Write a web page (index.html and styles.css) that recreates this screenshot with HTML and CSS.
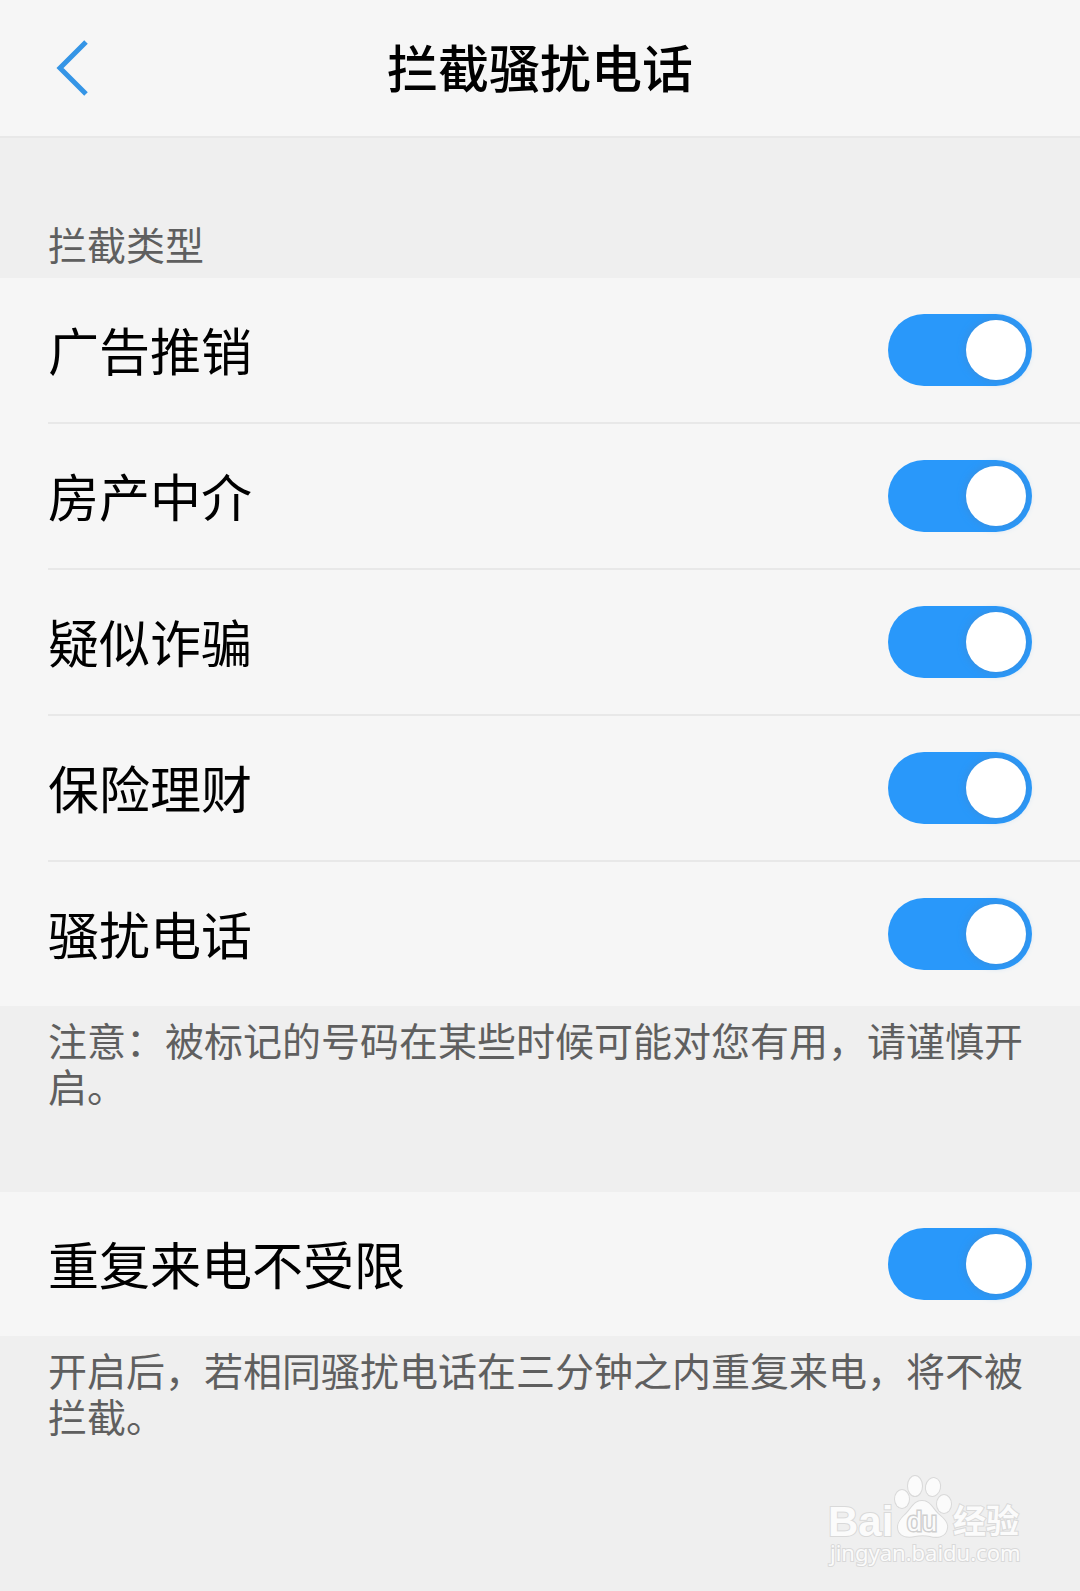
FILE: index.html
```html
<!DOCTYPE html>
<html lang="zh-CN">
<head>
<meta charset="utf-8">
<meta name="viewport" content="width=device-width, initial-scale=1">
<title>拦截骚扰电话</title>
<link rel="stylesheet" href="styles.css">
</head>
<body>
<div class="page">
  <header class="topbar">
    <button class="back" type="button" aria-label="返回">
      <svg width="32" height="56" viewBox="0 0 32 56" fill="none" stroke="#3595e6" stroke-width="5"><path d="M30 2 L4 28 L30 54"/></svg>
    </button>
    <h1 class="title">拦截骚扰电话</h1>
  </header>
  <main class="content">
    <section>
      <h2 class="section-label">拦截类型</h2>
      <div class="group">
        <label class="row"><span>广告推销</span><input class="switch" type="checkbox" role="switch" checked></label>
        <label class="row"><span>房产中介</span><input class="switch" type="checkbox" role="switch" checked></label>
        <label class="row"><span>疑似诈骗</span><input class="switch" type="checkbox" role="switch" checked></label>
        <label class="row"><span>保险理财</span><input class="switch" type="checkbox" role="switch" checked></label>
        <label class="row"><span>骚扰电话</span><input class="switch" type="checkbox" role="switch" checked></label>
      </div>
      <p class="note">注意：被标记的号码在某些时候可能对您有用，请谨慎开启。</p>
    </section>
    <section class="section-repeat">
      <div class="group">
        <label class="row"><span>重复来电不受限</span><input class="switch" type="checkbox" role="switch" checked></label>
      </div>
      <p class="note">开启后，若相同骚扰电话在三分钟之内重复来电，将不被拦截。</p>
    </section>
  </main>
  <footer class="watermark">
    <svg class="brand" width="230" height="125" viewBox="0 0 230 125">
      <g class="mark">
        <ellipse cx="92" cy="39" rx="7" ry="9"/>
        <ellipse cx="105" cy="26" rx="7" ry="10"/>
        <ellipse cx="123" cy="27" rx="7" ry="9" transform="rotate(12 123 27)"/>
        <ellipse cx="134" cy="44" rx="7" ry="9"/>
        <path d="M112 41 C120 41 122 48 128 54 C134 59 138 63 137 68 C136 77 127 78 120 76 C115 75 110 75 105 76 C97 78 88 76 88 67 C88 61 93 57 97 53 C102 48 104 41 112 41 Z"/>
        <text class="bai" x="18" y="76">Bai</text>
        <text class="jingyan" x="143" y="73">经验</text>
        <text class="url" x="20" y="101">jingyan.baidu.com</text>
      </g>
      <text class="du" x="112" y="71" text-anchor="middle">du</text>
    </svg>
  </footer>
</div>
</body>
</html>
```
FILE: styles.css
```css
* { box-sizing: border-box; }

body {
  margin: 0;
  background: #efefef;
  color: #000;
  font-family: "Noto Sans CJK SC", sans-serif;
}

.page {
  display: flex;
  flex-direction: column;
  min-height: 100vh;
}

.topbar {
  display: grid;
  grid-template-columns: 96px 1fr 96px;
  align-items: center;
  height: 138px;
  background: #f6f6f6;
  border-bottom: 2px solid #e8e8e8;
}

.back {
  display: flex;
  justify-content: flex-end;
  padding: 0 8px 0 0;
  border: 0;
  background: none;
}

.title {
  margin: 0;
  padding-bottom: 4px;
  font-size: 51px;
  line-height: 72px;
  font-weight: 500;
  text-align: center;
}

.section-label {
  margin: 0;
  padding: 82px 48px 12px;
  color: #5f5f5f;
  font-size: 39px;
  line-height: 46px;
  font-weight: 400;
}

.group {
  background: #f6f6f6;
}

.row {
  display: flex;
  align-items: center;
  justify-content: space-between;
  height: 144px;
  margin-left: 48px;
  padding-right: 48px;
  font-size: 51px;
  line-height: 72px;
}

.row span {
  padding-bottom: 2px;
}

.row + .row {
  height: 146px;
  border-top: 2px solid #e8e8e8;
}

.switch {
  appearance: none;
  display: flex;
  justify-content: flex-start;
  flex: none;
  width: 144px;
  height: 72px;
  margin: 0;
  padding: 6px;
  border-radius: 36px;
  background: #c8c8c8;
}

.switch::before {
  content: "";
  width: 60px;
  height: 60px;
  border-radius: 50%;
  background: #fff;
}

.switch:checked {
  justify-content: flex-end;
  background: #2998fa;
}

.switch:checked::before {
  box-shadow: 0 0 8px #3c8cd8;
}

.note {
  margin: 0;
  padding: 10px 48px 0;
  color: #5f5f5f;
  font-size: 39px;
  line-height: 46px;
}

.section-repeat {
  margin-top: 84px;
}

.watermark {
  display: flex;
  justify-content: flex-end;
  margin-top: auto;
  padding: 0 40px 6px;
}

.mark {
  fill: #fbfbfb;
  stroke: #d9d9d9;
  stroke-width: 2px;
  paint-order: stroke;
}

.bai {
  font: bold 42px "Liberation Sans", sans-serif;
}

.jingyan {
  font: bold 33px "Noto Sans CJK SC", sans-serif;
}

.url {
  font: 22px "Noto Sans", sans-serif;
}

.du {
  fill: #fbfbfb;
  stroke: #cfcfcf;
  stroke-width: 3px;
  paint-order: stroke;
  font: 27px "Liberation Sans", sans-serif;
}
```
